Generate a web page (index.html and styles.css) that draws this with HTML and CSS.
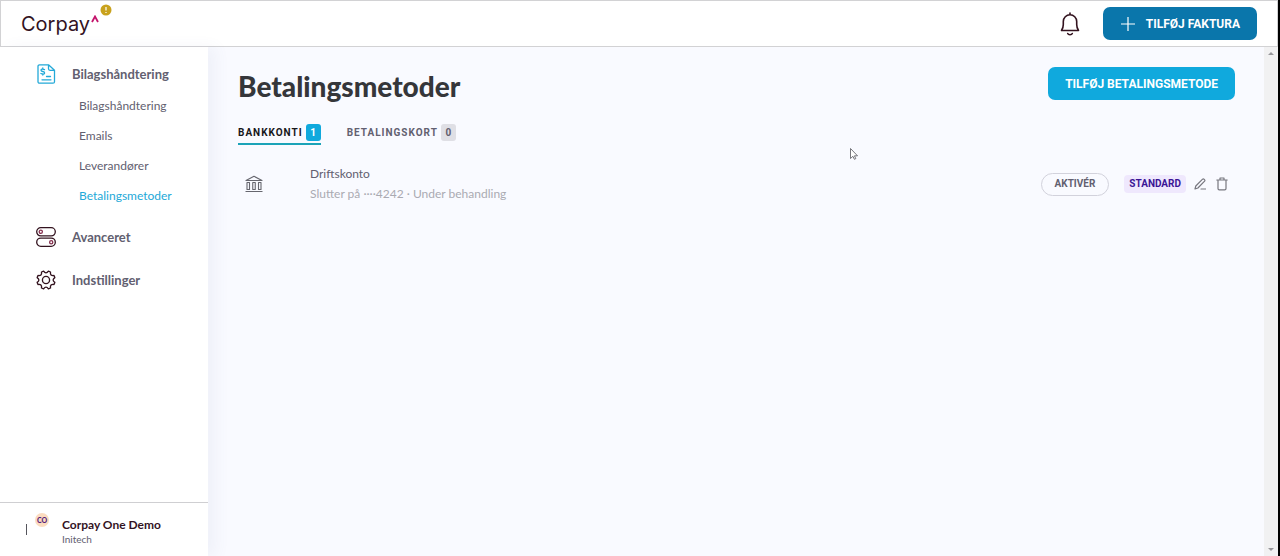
FILE: index.html
```html
<!DOCTYPE html>
<html lang="da">
<head>
    <meta charset="UTF-8">
    <meta name="viewport" content="width=device-width, initial-scale=1.0">
    <title>Betalingsmetoder</title>
    <link rel="stylesheet" href="styles.css">
</head>
<body>
    <header class="topbar">
        <a class="logo" href="#">
            <span class="logo-text">Corpay</span>
            <svg class="logo-caret" viewBox="0 0 8 8" width="8" height="8"><path d="M1 7 4 1.500 7 7" fill="none" stroke="#c4146c" stroke-width="1.800"/></svg>
            <svg class="logo-alert" viewBox="0 0 12 12" width="12" height="12"><circle cx="6" cy="6" r="5.500" fill="#c9a21d"/><path d="M6 3v3.600M6 8v1" stroke="#fff" stroke-width="1.200"/></svg>
        </a>
        <div class="topbar-actions">
            <button class="icon-button" aria-label="Notifikationer">
                <svg viewBox="0 0 22 24" width="22" height="24" fill="none" stroke="#33131f" stroke-width="1.600" stroke-linecap="round" stroke-linejoin="round"><path d="M11 1v1.500M2.500 18.500h17c-1-1.500-1.800-3.500-1.800-6V9.500a6.700 6.700 0 0 0-13.400 0v3c0 2.500-.8 4.500-1.800 6zM8.700 21.500c.6 1.600 4 1.600 4.600 0"/></svg>
            </button>
            <button class="button button-dark">
                <svg viewBox="0 0 16 16" width="16" height="16"><path d="M8 1v14M1 8h14" stroke="#fff" stroke-width="1.200"/></svg>
                TILFØJ FAKTURA
            </button>
        </div>
    </header>

    <div class="layout">
        <aside class="sidebar">
            <nav class="menu">
                <a class="menu-item" href="#">
                    <svg viewBox="0 0 20 20" width="20" height="20" fill="none" stroke="#23a9d8" stroke-width="1.300" stroke-linecap="round" stroke-linejoin="round"><path d="M3.500.8h9L18.500 6.300v11.400a1.500 1.500 0 0 1-1.500 1.500H3.500A1.500 1.500 0 0 1 2 17.700V2.300A1.500 1.500 0 0 1 3.500.8zM12.500.8v4a1.500 1.500 0 0 0 1.500 1.500h4.500M10.500 12.500h4M6 15.800h9M8.500 5.600C6.500 4.600 5 5 5 6.200c0 1.800 3.600.8 3.600 2.700 0 1.300-2 1.500-3.700.6M6.800 4v1M6.800 10v1"/></svg>
                    Bilagshåndtering
                </a>
                <div class="submenu">
                    <a href="#">Bilagshåndtering</a>
                    <a href="#">Emails</a>
                    <a href="#">Leverandører</a>
                    <a class="active" href="#">Betalingsmetoder</a>
                </div>
                <a class="menu-item" href="#">
                    <svg viewBox="0 0 20 20" width="20" height="20" fill="none" stroke="#33131f" stroke-width="1.300"><rect x=".7" y=".7" width="18.600" height="8.200" rx="4.100"/><rect x=".7" y="11.100" width="18.600" height="8.200" rx="4.100"/><circle cx="4.800" cy="4.800" r="1.600" stroke="#86304f"/><circle cx="15.200" cy="15.200" r="1.600" stroke="#86304f"/></svg>
                    Avanceret
                </a>
                <a class="menu-item" href="#">
                    <svg viewBox="0 0 24 24" width="20" height="20" fill="none" stroke="#33131f" stroke-width="1.600" stroke-linejoin="round"><path d="M9.100 1.400Q12 5.500 14.900 1.400L17.400 2.400Q16.600 7.400 21.600 6.600L22.600 9.100Q18.500 12 22.600 14.900L21.600 17.400Q16.600 16.600 17.400 21.600L14.900 22.600Q12 18.500 9.100 22.600L6.600 21.600Q7.400 16.600 2.400 17.400L1.400 14.900Q5.500 12 1.400 9.100L2.400 6.600Q7.400 7.400 6.600 2.400z"/><circle cx="12" cy="12" r="4.300"/></svg>
                    Indstillinger
                </a>
            </nav>
            <div class="account">
                <span class="account-bar"></span>
                <span class="avatar">CO</span>
                <div class="account-info">
                    <strong>Corpay One Demo</strong>
                    <span>Initech</span>
                </div>
            </div>
        </aside>

        <main class="content">
            <div class="content-head">
                <h1>Betalingsmetoder</h1>
                <button class="button button-light">TILFØJ BETALINGSMETODE</button>
            </div>

            <div class="tabs" role="tablist">
                <button class="tab active" role="tab" aria-selected="true">BANKKONTI <span class="count">1</span></button>
                <button class="tab" role="tab" aria-selected="false">BETALINGSKORT <span class="count">0</span></button>
            </div>

            <div class="method">
                <svg class="bank-icon" viewBox="0 0 18 18" width="18" height="18" fill="none" stroke="#66666e" stroke-width="1.100" stroke-linejoin="round"><path d="M1 5.500 9 1.300l8 4.200zM.5 16.500h17M2 7.500v7h2.500v-7zM7.750 7.500v7h2.500v-7zM13.500 7.500v7H16v-7z"/></svg>
                <div class="method-info">
                    <span class="method-name">Driftskonto</span>
                    <span class="method-detail">Slutter på ····4242 · Under behandling</span>
                </div>
                <div class="method-actions">
                    <button class="pill">AKTIVÉR</button>
                    <span class="tag">STANDARD</span>
                    <button class="icon-button" aria-label="Rediger">
                        <svg viewBox="0 0 12 12" width="12" height="12" fill="none" stroke="#77777f" stroke-width="1.200" stroke-linecap="round" stroke-linejoin="round"><path d="M1 11l.8-3L8.600 1.200q.7-.6 1.400 0l.6.6q.6.7 0 1.400L3.900 10zM7 11h4.500"/></svg>
                    </button>
                    <button class="icon-button" aria-label="Slet">
                        <svg viewBox="0 0 12 14" width="12" height="14" fill="none" stroke="#77777f" stroke-width="1.200" stroke-linecap="round" stroke-linejoin="round"><path d="M.8 3h10.400M4 3V1h4v2M2 3v8.500q0 1.300 1.300 1.300h5.400q1.300 0 1.300-1.300V3"/></svg>
                    </button>
                </div>
            </div>
        </main>

        <div class="scrollbar" aria-hidden="true">
            <span class="arrow-up"></span>
            <span class="arrow-down"></span>
        </div>
    </div>

    <svg class="cursor" viewBox="0 0 8 12" width="8" height="12"><path d="M.5.500v10l2.400-2.200 1.500 3 1.400-.7-1.400-2.800h3.100z" fill="#fff" stroke="#55555c" stroke-width=".8"/></svg>
</body>
</html>
```
FILE: styles.css
```css
* {
    box-sizing: border-box;
}

body {
    display: flex;
    flex-direction: column;
    height: 100vh;
    margin: 0;
    border-right: 2px solid #000;
    background: #f9faff;
    color: #626070;
    font-family: Lato, "Open Sans", sans-serif;
    font-size: 12px;
    line-height: 20px;
}

a {
    color: inherit;
    text-decoration: none;
}

button {
    padding: 0;
    border: none;
    background: none;
    color: inherit;
    font: inherit;
    cursor: pointer;
}

svg {
    display: block;
    flex: none;
}

.topbar {
    display: flex;
    flex: none;
    align-items: center;
    justify-content: space-between;
    height: 47px;
    padding: 0 20px;
    border: 1px solid #d2d2d4;
    background: #fff;
}

.logo {
    display: flex;
    align-items: flex-start;
    color: #33131f;
}

.logo-text {
    font-family: Inter, sans-serif;
    font-size: 20px;
    line-height: 22px;
}

.logo-caret {
    margin: 2px 1px 0;
}

.logo-alert {
    margin-top: -9px;
}

.topbar-actions {
    display: flex;
    align-items: center;
    gap: 22px;
}

.button {
    display: flex;
    align-items: center;
    gap: 10px;
    height: 33px;
    padding: 0 17px;
    border-radius: 7px;
    color: #fff;
    font-family: Roboto, sans-serif;
    font-weight: 700;
}

.button-dark {
    background: #0a76ab;
}

.button-light {
    background: #10a9dd;
}

.layout {
    display: flex;
    flex: 1;
    min-height: 0;
}

.sidebar {
    display: flex;
    flex-direction: column;
    justify-content: space-between;
    width: 208px;
    background: #fff;
    box-shadow: 8px 0 14px rgba(90, 100, 150, 0.06);
}

.menu {
    display: flex;
    flex-direction: column;
    gap: 23px;
    padding: 17px 0 0 36px;
}

.menu-item {
    display: flex;
    align-items: center;
    gap: 16px;
    font-size: 13px;
    font-weight: 700;
}

.submenu {
    display: flex;
    flex-direction: column;
    gap: 10px;
    margin: -11px 0 -2px;
    padding-left: 43px;
}

.submenu .active {
    color: #23a9d8;
}

.account {
    display: flex;
    align-items: center;
    height: 54px;
    padding-left: 26px;
    border-top: 1px solid #cfcfd2;
}

.account-bar {
    width: 1px;
    height: 11px;
    background: #55555c;
}

.avatar {
    width: 14px;
    height: 14px;
    margin: 0 13px 20px 8px;
    border-radius: 50%;
    background: #fbdcc0;
    color: #55207a;
    font-size: 7px;
    font-weight: 900;
    line-height: 14px;
    text-align: center;
}

.account-info {
    display: flex;
    flex-direction: column;
    padding-top: 5px;
    font-size: 10px;
    line-height: 14px;
}

.account-info strong {
    color: #33131f;
    font-size: 12px;
}

.content {
    flex: 1;
    padding: 20px 29px 0 30px;
}

.content-head {
    display: flex;
    align-items: flex-start;
    justify-content: space-between;
}

h1 {
    margin: 0;
    color: #35363a;
    font-size: 28px;
    font-weight: 900;
    line-height: 38px;
}

.tabs {
    display: flex;
    gap: 26px;
    margin-top: 19px;
}

.tab {
    display: flex;
    align-items: center;
    gap: 3px;
    padding-bottom: 2px;
    border-bottom: 2px solid transparent;
    font-family: Roboto, sans-serif;
    font-size: 10px;
    font-weight: 700;
    letter-spacing: 1px;
    line-height: 17px;
}

.tab.active {
    border-bottom-color: #1ba3b8;
    color: #17171b;
}

.count {
    width: 15px;
    border-radius: 3px;
    background: #dfdfe5;
    letter-spacing: 0;
    text-align: center;
}

.tab.active .count {
    background: #10a9dd;
    color: #fff;
}

.method {
    display: flex;
    align-items: center;
    margin-top: 19px;
    padding: 0 7px;
}

.method-info {
    display: flex;
    flex: 1;
    flex-direction: column;
    padding-left: 47px;
}

.method-detail {
    color: #aaaab2;
}

.method-actions {
    display: flex;
    align-items: center;
    gap: 10px;
}

.pill {
    height: 23px;
    margin-right: 5px;
    padding: 0 13px;
    border: 1px solid #d2d2dc;
    border-radius: 12px;
    font-family: Roboto, sans-serif;
    font-size: 10px;
    font-weight: 700;
}

.tag {
    margin-right: -2px;
    padding: 0 5px;
    border-radius: 4px;
    background: #efe8fd;
    color: #3b1596;
    font-family: Roboto, sans-serif;
    font-size: 10px;
    font-weight: 700;
    line-height: 18px;
}

.scrollbar {
    display: flex;
    flex-direction: column;
    align-items: center;
    justify-content: space-between;
    width: 14px;
    padding: 5px 0;
    background: #f1f1f2;
}

.arrow-up,
.arrow-down {
    border: 3px solid transparent;
}

.arrow-up {
    border-top: none;
    border-bottom-color: #97979b;
}

.arrow-down {
    border-bottom: none;
    border-top-color: #97979b;
}

.cursor {
    position: absolute;
    top: 148px;
    left: 850px;
}
```
